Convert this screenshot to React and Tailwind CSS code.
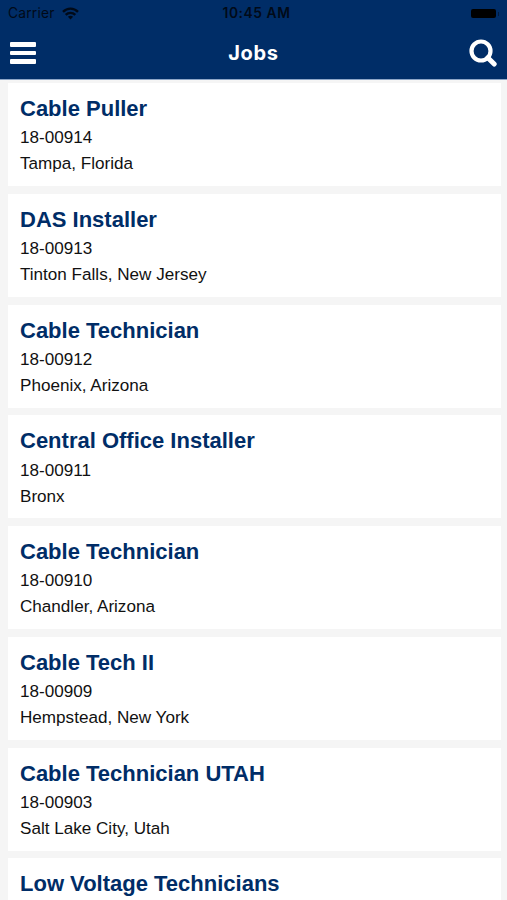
const jobs = [
  { title: "Cable Puller", number: "18-00914", place: "Tampa, Florida" },
  { title: "DAS Installer", number: "18-00913", place: "Tinton Falls, New Jersey" },
  { title: "Cable Technician", number: "18-00912", place: "Phoenix, Arizona" },
  { title: "Central Office Installer", number: "18-00911", place: "Bronx" },
  { title: "Cable Technician", number: "18-00910", place: "Chandler, Arizona" },
  { title: "Cable Tech II", number: "18-00909", place: "Hempstead, New York" },
  { title: "Cable Technician UTAH", number: "18-00903", place: "Salt Lake City, Utah" },
  { title: "Low Voltage Technicians" },
];

function WifiIcon() {
  return (
    <svg className="ml-[7px] h-[13px] w-[17px]" viewBox="0 0 17 13" fill="none" stroke="#000a18" strokeWidth="2.4">
      <path d="M1 4.8C5.2.6 11.8.6 16 4.8" />
      <path d="M3.7 7.9c2.7-2.7 6.9-2.7 9.6 0" />
      <path d="M5.9 9.8c1.5-1.4 3.7-1.4 5.2 0L8.5 12.5z" fill="#000a18" stroke="none" />
    </svg>
  );
}

function StatusBar() {
  return (
    <div className="grid h-[27px] grid-cols-[1fr_auto_1fr] items-center pl-[8px] pr-[8px] text-[13.8px] leading-[27px] text-[#000a18]">
      <div className="flex items-center">
        <span className="tracking-[0.2px]">Carrier</span>
        <WifiIcon />
      </div>
      <span className="translate-x-[3px] font-semibold tracking-[0.55px]">10:45 AM</span>
      <div className="flex items-center justify-end">
        <div className="h-[9px] w-[25px] rounded-[2px] bg-black" />
        <div className="ml-[2px] h-[4px] w-[1px] bg-[#001a40]" />
      </div>
    </div>
  );
}

function NavBar() {
  return (
    <div className="grid h-[52px] grid-cols-[1fr_auto_1fr] items-center pl-[10px] pr-[10px]">
      <button aria-label="Menu" className="flex w-[26px] flex-col gap-[4px]">
        <span className="h-[4.5px] rounded-[1px] bg-white" />
        <span className="h-[4.5px] rounded-[1px] bg-white" />
        <span className="h-[4.5px] rounded-[1px] bg-white" />
      </button>
      <h1 className="text-[20px] font-bold leading-[52px] tracking-[0.7px] text-white">Jobs</h1>
      <button aria-label="Search" className="justify-self-end">
        <svg className="h-[28px] w-[28px]" viewBox="0 0 28 28" fill="none" stroke="#fff">
          <circle cx="12" cy="12" r="9.5" strokeWidth="4.2" />
          <path d="M18.8 18.8l6.4 6.2" strokeWidth="5" strokeLinecap="round" />
        </svg>
      </button>
    </div>
  );
}

function JobCard({ title, number, place }) {
  return (
    <li className="h-[103px] shrink-0 bg-white pl-[12px] pt-[12px]">
      <h2 className="text-[22px] font-bold leading-[28px] text-[#002d67]">{title}</h2>
      {number && <p className="mt-[2.4px] text-[17.1px] leading-[26px] text-[#111]">{number}</p>}
      {place && <p className="text-[17.1px] leading-[26px] text-[#111]">{place}</p>}
    </li>
  );
}

export default function App() {
  return (
    <div className="flex h-[900px] w-full flex-col overflow-hidden bg-[#f5f5f5] font-['Liberation_Sans',Arial,sans-serif]">
      <header className="h-[80px] shrink-0 border-b border-[#8ea6c8] bg-[#002d67] font-['Inter',sans-serif]">
        <StatusBar />
        <NavBar />
      </header>
      <ul className="flex min-h-0 flex-1 flex-col gap-[7.75px] overflow-hidden pl-[8px] pr-[6px] pt-[3px]">
        {jobs.map((job, index) => (
          <JobCard key={index} {...job} />
        ))}
      </ul>
    </div>
  );
}
